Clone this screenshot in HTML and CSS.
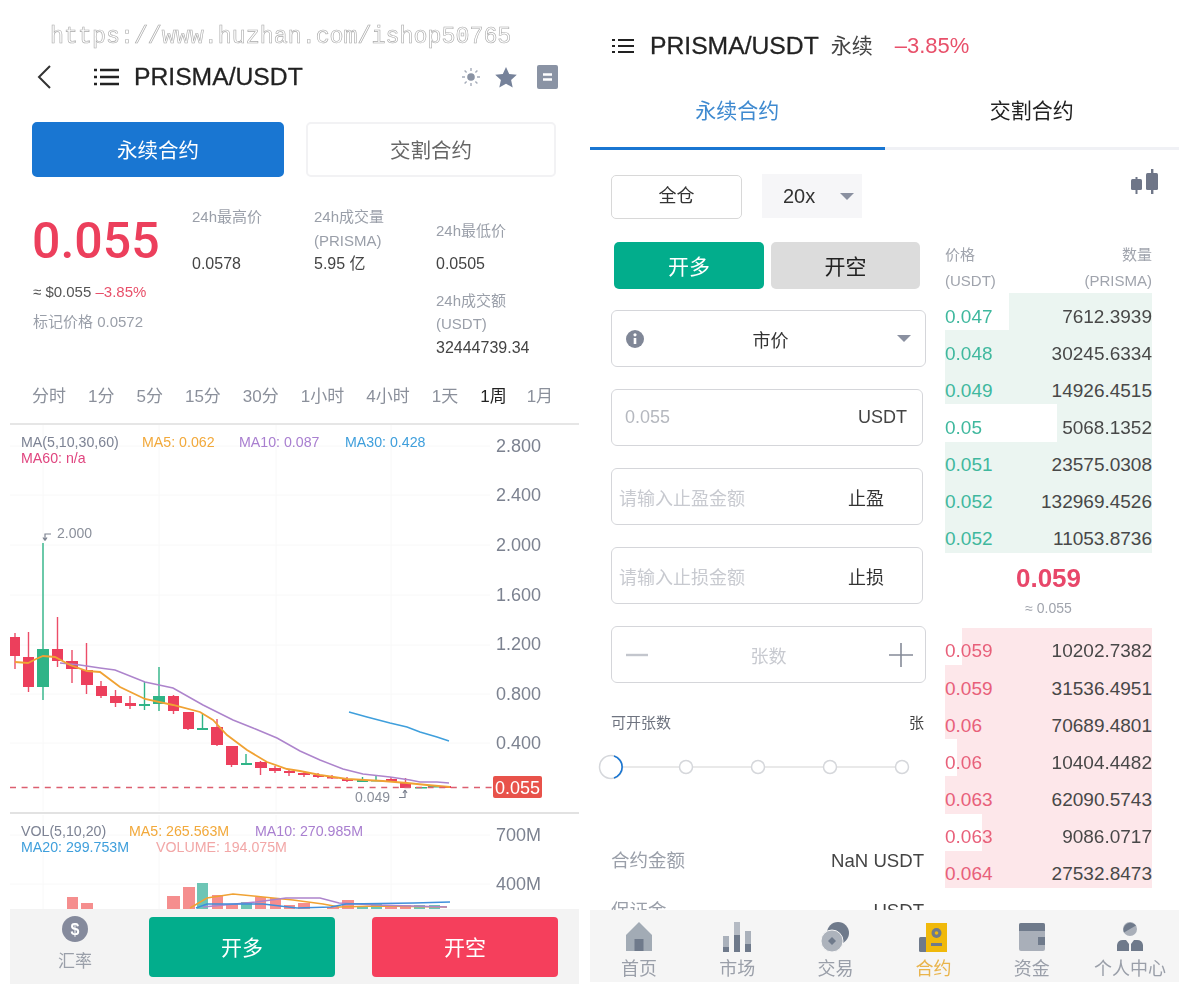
FILE: index.html
```html
<!DOCTYPE html>
<html lang="zh-CN">
<head>
    <meta charset="UTF-8">
    <meta name="viewport" content="width=device-width, initial-scale=1.0">
    <title>PRISMA/USDT</title>
    <link rel="stylesheet" href="styles.css">
</head>
<body>
<div class="page">

    <!-- left screen: market detail -->
    <section class="left">
        <div class="watermark">https://www.huzhan.com/ishop50765</div>

        <div class="nav">
            <svg class="back" width="14" height="24" viewBox="0 0 14 24"><path d="M13 1 2 12l11 11" fill="none" stroke="#333" stroke-width="2"/></svg>
            <svg class="list-icon" width="25" height="18" viewBox="0 0 25 18"><path d="M0 2h3M6 2h19M0 9h3M6 9h19M0 16h3M6 16h19" stroke="#222" stroke-width="2.4"/></svg>
            <span class="pair">PRISMA/USDT</span>
            <span class="nav-icons">
                <svg width="20" height="20" viewBox="0 0 20 20"><circle cx="10" cy="10" r="3.8" fill="#8a93a4"/><path d="M10 1v3M10 16v3M1 10h3M16 10h3M3.6 3.6l2 2M14.4 14.4l2 2M3.6 16.4l2-2M14.4 5.6l2-2" stroke="#a5acb9" stroke-width="1.4"/></svg>
                <svg class="star" width="22" height="21" viewBox="0 0 22 21"><path d="m11 0 3.2 7 7.6.8-5.7 5.1 1.6 7.6L11 16.7l-6.7 3.8 1.6-7.6L.2 7.8 7.800 7z" fill="#76829a"/></svg>
                <svg width="21" height="24" viewBox="0 0 21 24"><rect width="21" height="24" rx="2" fill="#8a93a4"/><path d="M6 9.5h9M6 14.5h9" stroke="#fff" stroke-width="2.4"/></svg>
            </span>
        </div>

        <div class="type-row">
            <div class="type-btn active">永续合约</div>
            <div class="type-btn">交割合约</div>
        </div>

        <div class="stats">
            <div class="stat-main">
                <div class="big-price">0.055</div>
                <div class="approx">≈ $0.055 <span class="red">–3.85%</span></div>
                <div class="mark">标记价格 0.0572</div>
            </div>
            <div class="stat-col">
                <div class="stat-label">24h最高价</div>
                <div class="stat-label">&nbsp;</div>
                <div class="stat-value">0.0578</div>
            </div>
            <div class="stat-col">
                <div class="stat-label">24h成交量</div>
                <div class="stat-label">(PRISMA)</div>
                <div class="stat-value">5.95 亿</div>
            </div>
            <div class="stat-col shifted">
                <div class="stat-label tall">24h最低价</div>
                <div class="stat-value">0.0505</div>
                <div class="stat-label gap">24h成交额</div>
                <div class="stat-label">(USDT)</div>
                <div class="stat-value">32444739.34</div>
            </div>
        </div>

        <div class="periods">
            <span>分时</span><span>1分</span><span>5分</span><span>15分</span><span>30分</span><span>1小时</span><span>4小时</span><span>1天</span><span class="on">1周</span><span>1月</span>
        </div>

        <svg class="chart" width="590" height="486" viewBox="0 423 590 486">
            <g stroke="#f8f8f8" fill="none">
                <path d="M43 425v386M159 425v386M276 425v386M391 425v386M43 815v94M159 815v94M276 815v94M391 815v94"/>
                <path d="M10 446h480M10 495h480M10 545h480M10 595h480M10 645h480M10 694h480M10 743h480M10 835h480M10 884h480"/>
            </g>
            <path d="M10 424h569" stroke="#e6e6e6" stroke-width="2"/>
            <path d="M10 813h569" stroke="#e2e2e2" stroke-width="2"/>

            <g class="legend">
                <text x="21" y="447" fill="#7d8394">MA(5,10,30,60)</text>
                <text x="142" y="447" fill="#f2a93b">MA5: 0.062</text>
                <text x="239" y="447" fill="#a97fd0">MA10: 0.087</text>
                <text x="345" y="447" fill="#3f9fdc">MA30: 0.428</text>
                <text x="21" y="463" fill="#e0457f">MA60: n/a</text>
                <text x="21" y="836" fill="#7d8394">VOL(5,10,20)</text>
                <text x="129" y="836" fill="#f2a93b">MA5: 265.563M</text>
                <text x="255" y="836" fill="#a97fd0">MA10: 270.985M</text>
                <text x="21" y="852" fill="#3f9fdc">MA20: 299.753M</text>
                <text x="156" y="852" fill="#f2a7a7">VOLUME: 194.075M</text>
            </g>

            <g class="axis">
                <text x="496" y="452">2.800</text>
                <text x="496" y="501">2.400</text>
                <text x="496" y="551">2.000</text>
                <text x="496" y="601">1.600</text>
                <text x="496" y="650">1.200</text>
                <text x="496" y="700">0.800</text>
                <text x="496" y="749">0.400</text>
                <text x="496" y="841">700M</text>
                <text x="496" y="890">400M</text>
            </g>

            <!-- candles: wicks -->
            <g stroke="#ec4d68" stroke-width="1.4">
                <path d="M15 633v36M28.5 632v60M57.5 617v50M72 650v33M86.5 643v51M101 681v17M115.5 690v17M130 696v13M173.5 695v19M188 712v18M217 719v27M231.5 746v21M260.5 761v14M275 766v7M289 770v6M304 771v6M318 773v5M332 775v4M347 777v5M391 777v5M405.5 778v10"/>
            </g>
            <g stroke="#2fb487" stroke-width="1.4">
                <path d="M43 543v157M144.5 682v28M159 667v44M202.5 714v15M246 754v11M362.5 777v5M376 776v5"/>
            </g>
            <!-- candles: bodies -->
            <g fill="#ec3f5c">
                <rect x="10" y="637" width="10" height="19"/>
                <rect x="23" y="657" width="11" height="30"/>
                <rect x="52" y="649" width="11" height="12"/>
                <rect x="66" y="661" width="12" height="8"/>
                <rect x="81" y="670" width="12" height="15"/>
                <rect x="96" y="686" width="11" height="10"/>
                <rect x="110" y="696" width="12" height="7"/>
                <rect x="125" y="703" width="11" height="3"/>
                <rect x="168" y="696" width="11" height="15"/>
                <rect x="183" y="712" width="11" height="17"/>
                <rect x="211" y="727" width="12" height="18"/>
                <rect x="226" y="746" width="12" height="19"/>
                <rect x="255" y="762" width="12" height="6"/>
                <rect x="269" y="768" width="12" height="3"/>
                <rect x="284" y="771" width="11" height="2"/>
                <rect x="298" y="773" width="12" height="2"/>
                <rect x="313" y="775" width="11" height="2"/>
                <rect x="327" y="777" width="11" height="1.5"/>
                <rect x="342" y="779" width="11" height="2"/>
                <rect x="386" y="779" width="11" height="3"/>
                <rect x="400" y="783" width="11" height="5"/>
                <rect x="443" y="786" width="8" height="2"/>
            </g>
            <g fill="#2fb487">
                <rect x="37" y="649" width="12" height="38"/>
                <rect x="139" y="704" width="11" height="2"/>
                <rect x="153" y="696" width="12" height="8"/>
                <rect x="197" y="728" width="11" height="2"/>
                <rect x="241" y="763" width="11" height="2"/>
                <rect x="357" y="780" width="11" height="2"/>
                <rect x="371" y="780" width="11" height="1.5"/>
                <rect x="415" y="787" width="12" height="1.5"/>
                <rect x="428" y="786" width="12" height="1.5"/>
            </g>

            <g fill="none" stroke-width="1.5">
                <polyline stroke="#ad84cc" points="60,663 80,665 100,668 115,670 145,682 173,688 203,705 233,720 253,728 277,738 300,751 320,760 343,769 363,774 390,777 410,780 420,782 437,782 449,783"/>
                <polyline stroke="#3f9fdc" points="349,712 367,717 390,723 407,727 420,732 437,737 449,741"/>
                <polyline stroke="#f0a233" stroke-width="1.8" points="15,662 28,663 36,659 43,656 55,657 70,665 87,671 100,672 120,687 145,699 173,705 200,712 213,720 227,735 247,750 267,762 287,769 300,771 320,775 347,779 383,781 407,783 427,785 450,787"/>
            </g>

            <path d="M10 787.5h482" stroke="#dc5f70" stroke-width="1.5" stroke-dasharray="6 5.6"/>

            <text class="note" x="57" y="538">2.000</text>
            <path d="M51 534h-6v6M45 540.5l-2-3M45 540.5l2-3" fill="none" stroke="#7c8290" stroke-width="1.2"/>
            <text class="note" x="355" y="802">0.049</text>
            <path d="M399 797.5h6v-6M405 790l2 3M405 790l-2 3" fill="none" stroke="#7c8290" stroke-width="1.2"/>

            <rect x="493" y="776" width="49" height="22" rx="2" fill="#e8524a"/>
            <text class="tag" x="495" y="793.5">0.055</text>

            <!-- volume -->
            <g fill="#f58e8e">
                <rect x="67" y="897" width="11" height="12"/>
                <rect x="81" y="903" width="12" height="6"/>
                <rect x="167" y="896" width="13" height="13"/>
                <rect x="183" y="887" width="12" height="22"/>
                <rect x="212" y="895" width="11" height="14"/>
                <rect x="226" y="904" width="12" height="5"/>
                <rect x="255" y="897" width="11" height="12"/>
                <rect x="270" y="898" width="11" height="11"/>
                <rect x="284" y="905" width="11" height="4"/>
                <rect x="298" y="903" width="12" height="6"/>
                <rect x="327" y="907" width="12" height="2"/>
                <rect x="342" y="900" width="12" height="9"/>
                <rect x="385" y="905" width="12" height="4"/>
                <rect x="400" y="905" width="11" height="4"/>
            </g>
            <g fill="#6dc5b5">
                <rect x="197" y="883" width="11" height="26"/>
                <rect x="241" y="902" width="11" height="7"/>
                <rect x="357" y="906" width="11" height="3"/>
                <rect x="371" y="904" width="11" height="5"/>
                <rect x="414" y="905" width="11" height="4"/>
                <rect x="429" y="905" width="11" height="4"/>
            </g>
            <g fill="none" stroke-width="1.5">
                <polyline stroke="#f0a233" points="190,908 207,898 233,894 263,897 293,900 323,904 339,907 376,906 447,907"/>
                <polyline stroke="#ad84cc" points="203,907 256,902 286,898 320,898 339,903 376,905 447,907"/>
                <polyline stroke="#3f8fdc" points="196,908 207,904 263,904 297,908 331,907 346,904 414,903 450,902"/>
            </g>
        </svg>

        <div class="trade-bar">
            <div class="rate">
                <svg width="26" height="26" viewBox="0 0 26 26"><circle cx="13" cy="13" r="13" fill="#858a9c"/><text x="13" y="19" class="dollar">$</text></svg>
                <span>汇率</span>
            </div>
            <div class="trade-btn long">开多</div>
            <div class="trade-btn short">开空</div>
        </div>
    </section>

    <!-- right screen: order form -->
    <section class="right">
        <div class="head">
            <svg class="list-icon" width="22" height="16" viewBox="0 0 22 16"><path d="M0 2h3M6 2h16M0 8h3M6 8h16M0 14h3M6 14h16" stroke="#222" stroke-width="2.2"/></svg>
            <span class="pair">PRISMA/USDT</span>
            <span class="perp">永续</span>
            <span class="head-change">–3.85%</span>
        </div>

        <div class="tabs">
            <div class="tab active">永续合约</div>
            <div class="tab">交割合约</div>
        </div>

        <div class="body">
            <div class="form">
                <div class="margin-row">
                    <div class="margin-box">全仓</div>
                    <div class="lever-box"><span>20x</span><i class="caret"></i></div>
                </div>
                <div class="side-row">
                    <div class="side long">开多</div>
                    <div class="side idle">开空</div>
                </div>
                <div class="field select">
                    <svg width="18" height="18" viewBox="0 0 18 18"><circle cx="9" cy="9" r="9" fill="#808797"/><path d="M9 8v6" stroke="#fff" stroke-width="2.6"/><circle cx="9" cy="4.8" r="1.6" fill="#fff"/></svg>
                    <span class="select-text">市价</span>
                    <i class="caret"></i>
                </div>
                <div class="field short-field"><span class="ph-num">0.055</span><span class="unit">USDT</span></div>
                <div class="field short-field tp"><span class="ph">请输入止盈金额</span><span class="unit-cn">止盈</span></div>
                <div class="field short-field tp"><span class="ph">请输入止损金额</span><span class="unit-cn">止损</span></div>
                <div class="field stepper">
                    <svg width="22" height="22" viewBox="0 0 22 22"><path d="M0 11h22" stroke="#c3c6cd" stroke-width="2.4"/></svg>
                    <span class="ph">张数</span>
                    <svg width="24" height="24" viewBox="0 0 24 24"><path d="M0 12h24M12 0v24" stroke="#858b98" stroke-width="1.6"/></svg>
                </div>
                <div class="avail"><span>可开张数</span><span class="avail-unit">张</span></div>
                <svg class="slider" width="326" height="30" viewBox="0 0 326 30">
                    <path d="M10 15h292" stroke="#e2e2e2" stroke-width="1.5"/>
                    <g fill="#fff" stroke="#d5d7db" stroke-width="1.5">
                        <circle cx="87" cy="15" r="6.5"/>
                        <circle cx="159" cy="15" r="6.5"/>
                        <circle cx="231" cy="15" r="6.5"/>
                        <circle cx="303" cy="15" r="6.5"/>
                        <circle cx="12" cy="15" r="11.5"/>
                    </g>
                    <path d="M15 4a11.5 11.5 0 0 1 0 22" fill="none" stroke="#1976d2" stroke-width="1.6"/>
                </svg>
                <div class="summary"><span class="sum-label">合约金额</span><span>NaN USDT</span></div>
                <div class="summary second"><span class="sum-label">保证金</span><span>USDT</span></div>
            </div>

            <div class="book">
                <svg class="candle-icon" width="27" height="25" viewBox="0 0 27 25"><g fill="#6f7688"><rect x="0" y="10" width="11" height="11" rx="1.5"/><rect x="4.5" y="8" width="2" height="17"/><rect x="15" y="4" width="12" height="17" rx="1.5"/><rect x="20" y="0" width="2.4" height="25"/></g></svg>
                <div class="book-head">
                    <div><span>价格</span><span>数量</span></div>
                    <div><span>(USDT)</span><span>(PRISMA)</span></div>
                </div>
                <div class="rows buy">
                    <div class="row"><i class="bar" style="width:69%"></i><span class="price">0.047</span><span class="qty">7612.3939</span></div>
                    <div class="row"><i class="bar" style="width:100%"></i><span class="price">0.048</span><span class="qty">30245.6334</span></div>
                    <div class="row"><i class="bar" style="width:100%"></i><span class="price">0.049</span><span class="qty">14926.4515</span></div>
                    <div class="row"><i class="bar" style="width:46%"></i><span class="price">0.05</span><span class="qty">5068.1352</span></div>
                    <div class="row"><i class="bar" style="width:100%"></i><span class="price">0.051</span><span class="qty">23575.0308</span></div>
                    <div class="row"><i class="bar" style="width:100%"></i><span class="price">0.052</span><span class="qty">132969.4526</span></div>
                    <div class="row"><i class="bar" style="width:100%"></i><span class="price">0.052</span><span class="qty">11053.8736</span></div>
                </div>
                <div class="mid">
                    <div class="mid-price">0.059</div>
                    <div class="mid-approx">≈ 0.055</div>
                </div>
                <div class="rows sell">
                    <div class="row"><i class="bar" style="width:92%"></i><span class="price">0.059</span><span class="qty">10202.7382</span></div>
                    <div class="row"><i class="bar" style="width:100%"></i><span class="price">0.059</span><span class="qty">31536.4951</span></div>
                    <div class="row"><i class="bar" style="width:100%"></i><span class="price">0.06</span><span class="qty">70689.4801</span></div>
                    <div class="row"><i class="bar" style="width:94%"></i><span class="price">0.06</span><span class="qty">10404.4482</span></div>
                    <div class="row"><i class="bar" style="width:100%"></i><span class="price">0.063</span><span class="qty">62090.5743</span></div>
                    <div class="row"><i class="bar" style="width:82%"></i><span class="price">0.063</span><span class="qty">9086.0717</span></div>
                    <div class="row"><i class="bar" style="width:100%"></i><span class="price">0.064</span><span class="qty">27532.8473</span></div>
                </div>
            </div>
        </div>

        <nav class="tabbar">
            <div class="tabbar-item">
                <svg width="28" height="30" viewBox="0 0 28 30"><path d="M14 0 27 13v16H1V13z" fill="#a2abb5"/><rect x="9.5" y="17" width="9" height="12" fill="#6f7a8b"/></svg>
                <span>首页</span>
            </div>
            <div class="tabbar-item">
                <svg width="30" height="30" viewBox="0 0 30 30"><rect x="1" y="14" width="6" height="16" fill="#aab1bb"/><rect x="1" y="25" width="6" height="5" fill="#6f7a8b"/><rect x="12" y="0" width="6" height="30" fill="#b5bbc4"/><rect x="12" y="13" width="6" height="17" fill="#6f7a8b"/><rect x="23" y="9" width="6" height="21" fill="#aab1bb"/><rect x="23" y="22" width="6" height="8" fill="#6f7a8b"/></svg>
                <span>市场</span>
            </div>
            <div class="tabbar-item">
                <svg width="30" height="30" viewBox="0 0 30 30"><circle cx="18" cy="11" r="11" fill="#6f7a8b"/><circle cx="12" cy="19" r="11" fill="#adb3bc" stroke="#f5f5f5" stroke-width="1"/><path d="m12 15 4 4-4 4-4-4z" fill="#6f7a8b"/></svg>
                <span>交易</span>
            </div>
            <div class="tabbar-item gold">
                <svg width="30" height="30" viewBox="0 0 30 30"><rect x="0" y="15" width="8" height="15" rx="1.5" fill="#6f7a8b"/><rect x="7" y="1" width="21" height="29" fill="#f0b90b"/><circle cx="17.5" cy="11" r="5" fill="#6f7a8b"/><circle cx="17.5" cy="11" r="1.8" fill="#f0b90b"/><rect x="12" y="21" width="11" height="3" fill="#6f7a8b"/></svg>
                <span>合约</span>
            </div>
            <div class="tabbar-item">
                <svg width="26" height="30" viewBox="0 0 26 30"><rect y="1" width="26" height="28" rx="2" fill="#a9afb9"/><path d="M0 9V3a2 2 0 0 1 2-2h22a2 2 0 0 1 2 2v6z" fill="#6f7a8b"/><rect x="19" y="15" width="7" height="8" fill="#6f7a8b"/></svg>
                <span>资金</span>
            </div>
            <div class="tabbar-item">
                <svg width="28" height="30" viewBox="0 0 28 30"><circle cx="14" cy="7" r="7" fill="#a9afb9"/><path d="M8 10.5A7 7 0 0 1 20 3.5z" fill="#6f7a8b"/><path d="M1 29v-6a6 6 0 0 1 6-5h3l3 4v7z" fill="#6f7a8b"/><path d="M27 29v-6a6 6 0 0 0-6-5h-3l-3 4v7z" fill="#6f7a8b"/></svg>
                <span>个人中心</span>
            </div>
        </nav>
    </section>

</div>
</body>
</html>
```

FILE: styles.css
```css
* {
    box-sizing: border-box;
}
body {
    margin: 0;
    background: #fff;
    color: #333;
    font-family: "Liberation Sans", "Noto Sans CJK SC", sans-serif;
}
.page {
    display: flex;
    width: 1179px;
    height: 996px;
    overflow: hidden;
    filter: blur(0.35px);
}
.red {
    color: #e8506a;
}
.list-icon {
    flex: none;
}
.pair {
    font-size: 24.7px;
    color: #222;
    -webkit-text-stroke: 0.3px #222;
}

/* left screen */
.left {
    width: 590px;
    flex: none;
}
.watermark {
    height: 58px;
    padding: 24px 0 0 50px;
    font-family: "Liberation Mono", monospace;
    font-size: 23.3px;
    line-height: 26px;
    color: #fff;
    -webkit-text-stroke: 0.6px #a9a9a9;
}
.nav {
    display: flex;
    align-items: center;
    height: 38px;
    padding: 0 32px 0 37px;
}
.back {
    margin-right: 43px;
}
.nav .pair {
    margin-left: 15px;
}
.nav-icons {
    display: flex;
    align-items: center;
    gap: 14px;
    margin-left: auto;
}
.star {
    margin-right: 6px;
}
.type-row {
    display: flex;
    gap: 22px;
    margin: 26px 0 0 32px;
    width: 524px;
}
.type-btn {
    width: 250px;
    height: 55px;
    line-height: 54px;
    text-align: center;
    font-size: 20.5px;
    color: #666;
    border: 2px solid #f2f2f4;
    border-radius: 5px;
}
.type-btn.active {
    width: 252px;
    background: #1976d2;
    border-color: #1976d2;
    color: #fff;
}
.stats {
    display: flex;
    height: 203px;
    padding: 28px 0 0 33px;
}
.stat-main {
    width: 159px;
}
.big-price {
    margin: 6px 0 0 -1px;
    font-family: Roboto, sans-serif;
    font-weight: 500;
    font-size: 50px;
    line-height: 60px;
    color: #ec3f5c;
}
.approx {
    margin-top: 11px;
    font-size: 15px;
    line-height: 20px;
    color: #555;
}
.mark {
    margin-top: 10px;
    font-size: 15px;
    line-height: 20px;
    color: #9a9fa9;
}
.stat-col {
    width: 122px;
    font-size: 15px;
    line-height: 23.5px;
}
.stat-col.shifted {
    width: 130px;
    padding-top: 13.5px;
}
.stat-label {
    color: #9a9fa9;
}
.stat-label.gap {
    margin-top: 13px;
}
.stat-value {
    font-size: 16px;
    color: #444;
}
.stat-label.tall {
    margin-bottom: 10px;
}
.periods {
    display: flex;
    gap: 22px;
    height: 43px;
    padding: 5px 0 0 32px;
    font-size: 17px;
    line-height: 24px;
    color: #8b909b;
}
.periods .on {
    margin-right: -2px;
    color: #222;
}
.chart {
    display: block;
}
.chart text {
    font-family: "Liberation Sans", sans-serif;
}
.legend {
    font-size: 14.2px;
}
.axis {
    font-size: 18px;
    fill: #7c8290;
}
.note {
    font-size: 14px;
    fill: #8b909b;
}
.tag {
    font-size: 18px;
    fill: #fff;
}
.trade-bar {
    display: flex;
    align-items: center;
    width: 569px;
    height: 75px;
    margin-left: 10px;
    background: #f3f3f3;
}
.rate {
    display: flex;
    flex-direction: column;
    align-items: center;
    gap: 8px;
    width: 130px;
    margin: -4px 9px 0 0;
    font-size: 17px;
    line-height: 24px;
    color: #9a9fa9;
}
.rate svg {
    display: block;
}
.dollar {
    font-size: 16px;
    font-weight: bold;
    text-anchor: middle;
    fill: #fff;
}
.trade-btn {
    width: 186px;
    height: 60px;
    line-height: 62px;
    text-align: center;
    font-size: 21px;
    color: #fff;
    border-radius: 4px;
}
.trade-btn.long {
    background: #02ad8c;
    margin-right: 37px;
}
.trade-btn.short {
    background: #f53f5c;
}

/* right screen */
.right {
    width: 589px;
    flex: none;
}
.head {
    display: flex;
    align-items: center;
    height: 92px;
    padding-left: 22px;
}
.head .pair {
    margin-left: 16px;
}
.perp {
    margin: 0 0 5px 12px;
    font-size: 21px;
    color: #444;
}
.head-change {
    margin-left: 22px;
    font-size: 22px;
    color: #e8506a;
}
.tabs {
    display: flex;
    height: 58px;
    border-bottom: 3px solid #f0f1f5;
}
.tab {
    width: 294.5px;
    height: 58px;
    line-height: 38px;
    text-align: center;
    font-size: 21px;
    color: #222;
}
.tab.active {
    color: #3f8ad0;
    border-bottom: 3px solid #1976d2;
}
.body {
    display: flex;
    height: 760px;
    overflow: hidden;
    padding-left: 21px;
}
.form {
    width: 316px;
    flex: none;
    margin-right: 18px;
}
.margin-row {
    display: flex;
    gap: 20px;
    padding-top: 25px;
}
.margin-box {
    width: 131px;
    height: 44px;
    line-height: 41px;
    text-align: center;
    font-size: 18px;
    border: 1.5px solid #d8d8d8;
    border-radius: 5px;
}
.lever-box {
    display: flex;
    align-items: center;
    justify-content: space-between;
    width: 100px;
    height: 44px;
    margin-top: -1px;
    padding: 0 8px 0 21px;
    font-size: 20px;
    background: #f6f6f8;
}
.caret {
    width: 0;
    height: 0;
    border-left: 7px solid transparent;
    border-right: 7px solid transparent;
    border-top: 7px solid #8a90a0;
}
.side-row {
    display: flex;
    gap: 7px;
    margin: 23px 0 21px 3px;
}
.side {
    width: 150px;
    height: 47px;
    line-height: 50px;
    text-align: center;
    font-size: 21px;
    border-radius: 5px;
}
.side.long {
    background: #02ad8c;
    color: #fff;
}
.side.idle {
    width: 149px;
    background: #dcdcdc;
    color: #222;
}
.field {
    display: flex;
    align-items: center;
    justify-content: space-between;
    height: 57px;
    margin-bottom: 22px;
    border: 1.5px solid #d5d6da;
    border-radius: 6px;
    font-size: 18px;
}
.select {
    width: 315px;
    padding: 0 14px;
}
.select-text {
    color: #333;
}
.short-field {
    width: 312px;
    padding: 0 15px 0 13px;
}
.tp {
    padding: 0 38px 0 7px;
}
.ph-num {
    color: #b5b8bf;
}
.ph {
    color: #c8cad0;
}
.unit {
    color: #444;
}
.unit-cn {
    color: #333;
}
.stepper {
    width: 315px;
    margin-bottom: 30px;
    padding: 0 12px 0 14px;
}
.avail {
    display: flex;
    justify-content: space-between;
    width: 313px;
    font-size: 15px;
    line-height: 20px;
    color: #6f7480;
}
.avail-unit {
    color: #444;
}
.slider {
    display: block;
    margin: 19px 0 0 -12px;
    overflow: visible;
}
.summary {
    display: flex;
    justify-content: space-between;
    width: 313px;
    margin-top: 66px;
    font-size: 18.6px;
    line-height: 26px;
    color: #444;
}
.summary.second {
    margin-top: 24px;
}
.sum-label {
    font-size: 18.5px;
    color: #9a9fa9;
}
.book {
    position: relative;
    width: 207px;
    flex: none;
    padding-top: 92px;
}
.candle-icon {
    position: absolute;
    top: 19px;
    right: -6px;
}
.book-head {
    height: 51px;
    font-size: 15px;
    line-height: 26px;
    color: #a0a4ad;
}
.book-head div {
    display: flex;
    justify-content: space-between;
}
.rows {
    display: flex;
    flex-direction: column;
}
.row {
    position: relative;
    display: flex;
    justify-content: space-between;
    height: 37.14px;
    padding-top: 9.5px;
    font-size: 19px;
    line-height: 28px;
    color: #484848;
}
.row span {
    position: relative;
}
.bar {
    position: absolute;
    top: 0;
    right: 0;
    bottom: 0;
}
.buy .bar {
    background: #ebf5f1;
}
.sell .bar {
    background: #fde7ea;
}
.buy .price {
    color: #3fb89e;
}
.sell .price {
    color: #e8607a;
}
.mid {
    height: 75px;
    text-align: center;
}
.mid-price {
    padding-top: 10px;
    font-size: 26px;
    line-height: 30px;
    font-weight: bold;
    color: #e8476a;
}
.mid-approx {
    margin-top: 6px;
    font-size: 14px;
    line-height: 18px;
    color: #a0a4ad;
}
.tabbar {
    display: flex;
    height: 72px;
    padding-top: 12px;
    background: #f5f5f5;
}
.tabbar-item {
    display: flex;
    flex-direction: column;
    align-items: center;
    gap: 5px;
    width: 98.3px;
    font-size: 18px;
    line-height: 24px;
    color: #9a9fa9;
}
.tabbar-item svg {
    display: block;
}
.tabbar-item.gold {
    color: #e9b44c;
}
```
